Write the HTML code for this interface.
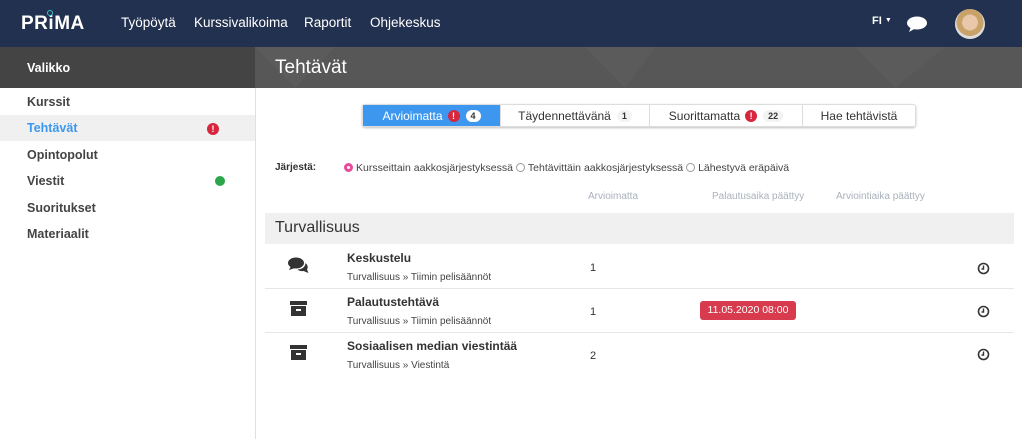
<!DOCTYPE html>
<html><head><meta charset="utf-8"><style>
*{margin:0;padding:0;box-sizing:border-box}
body{width:1022px;height:439px;overflow:hidden;background:#fff;font-family:"Liberation Sans",sans-serif;position:relative;color:#333}
.a{position:absolute;white-space:nowrap}
.nav{left:0;top:0;width:1022px;height:47px;background:#22314f}
.bar{top:47px;height:41px}
.side div{position:absolute;left:27px;font-size:12.5px;color:#444;font-weight:bold}
.tabs{left:362px;top:104px;width:554px;height:23px;border:1px solid #ddd;border-radius:3px;box-shadow:0 1px 2px rgba(0,0,0,.25);display:flex;font-size:12px}
.tabs div{height:100%;display:flex;align-items:center;justify-content:center;border-right:1px solid #ddd}
.ex{display:inline-block;width:12px;height:12px;border-radius:50%;background:#d7263d;color:#fff;font-size:9px;font-weight:bold;text-align:center;line-height:12px;margin-left:5px}
.cnt{display:inline-block;font-size:9px;font-weight:bold;padding:1px 5px;border-radius:7px;background:#f3f3f3;margin-left:6px;color:#333}
.rad{display:inline-block;width:9px;height:9px;border-radius:50%;border:1px solid #999;margin-right:3px;vertical-align:-1px}
.row{left:265px;width:749px;height:44px;border-bottom:1px solid #e6e6e6}
.t{font-size:12px;font-weight:bold;color:#333}
.s{font-size:10px;color:#444}
.box{width:17px;height:15px}
.box:before{content:"";position:absolute;left:0;top:0;width:17px;height:4px;background:#333}
.box:after{content:"";position:absolute;left:1px;top:5px;width:15px;height:10px;background:#333}
.box i{position:absolute;left:6px;top:8px;width:5px;height:1.5px;background:#fff;z-index:2}
</style></head><body>
<div class="a nav"></div>
<div class="a" style="left:21px;top:13px;color:#fff;font-size:19px;font-weight:bold;letter-spacing:0.5px">PR<span style="position:relative">i<span style="position:absolute;left:-1px;top:-3px;width:6px;height:6px;border:1.5px solid #3cc3c8;border-radius:50%"></span></span>MA</div>
<div class="a" style="left:121px;top:15px;color:#fff;font-size:13.5px">Työpöytä</div>
<div class="a" style="left:194px;top:15px;color:#fff;font-size:13.5px">Kurssivalikoima</div>
<div class="a" style="left:304px;top:15px;color:#fff;font-size:13.5px">Raportit</div>
<div class="a" style="left:370px;top:15px;color:#fff;font-size:13.5px">Ohjekeskus</div>
<div class="a" style="left:872px;top:15px;color:#fff;font-size:11px;font-weight:bold">FI <span style="font-size:7px;vertical-align:2px">▼</span></div>
<svg class="a" style="left:906px;top:15px" width="22" height="18" viewBox="0 0 22 18"><ellipse cx="11" cy="8" rx="10" ry="6.5" fill="#fff"/><path d="M5 12 L3 17 L10 13Z" fill="#fff"/></svg>
<div class="a" style="left:955px;top:9px;width:30px;height:30px;border-radius:50%;background:radial-gradient(circle at 50% 45%,#e8c8a8 0 35%,#c9a26a 36% 60%,#ddd 61%)"></div>
<div class="a bar" style="left:0;width:255px;background:#444"></div>
<div class="a bar" style="left:255px;width:767px;background:#575757;overflow:hidden">
<svg width="767" height="41"><path d="M0 0 L40 41 L80 0Z M330 0 L370 41 L400 0Z M600 0 L640 41 L690 0Z" fill="#5b5b5b"/></svg></div>
<div class="a" style="left:27px;top:61px;color:#fff;font-size:12.5px;font-weight:bold">Valikko</div>
<div class="a" style="left:275px;top:57px;color:#fff;font-size:19px">Tehtävät</div>
<div class="a" style="left:255px;top:88px;width:1px;height:351px;background:#e0e0e0"></div>
<div class="a" style="left:0;top:115px;width:255px;height:26px;background:#f0f0f0"></div>
<div class="side">
<div style="top:95px">Kurssit</div>
<div style="top:121px;color:#3d97ee">Tehtävät</div>
<div style="top:148px">Opintopolut</div>
<div style="top:174px">Viestit</div>
<div style="top:201px">Suoritukset</div>
<div style="top:227px">Materiaalit</div>
</div>
<div class="a ex" style="left:207px;top:123px;margin:0">!</div>
<div class="a" style="left:215px;top:176px;width:10px;height:10px;border-radius:50%;background:#2ca64a"></div>
<div class="a tabs">
<div style="width:138px;background:#3d97ee;color:#fff">Arvioimatta<span class="ex">!</span><span class="cnt" style="background:#fff">4</span></div>
<div style="width:149px">Täydennettävänä<span class="cnt">1</span></div>
<div style="width:153px">Suorittamatta<span class="ex">!</span><span class="cnt">22</span></div>
<div style="width:112px;border:0">Hae tehtävistä</div>
</div>
<div class="a" style="left:275px;top:162px;font-size:10px;font-weight:bold">Järjestä:</div>
<div class="a" style="left:344px;top:162px;font-size:10.5px;color:#444"><span class="rad" style="border:3px solid #e84b9b"></span>Kursseittain aakkosjärjestyksessä <span class="rad"></span>Tehtävittäin aakkosjärjestyksessä <span class="rad"></span>Lähestyvä eräpäivä</div>
<div class="a" style="left:588px;top:191px;font-size:10px;color:#aab2bb">Arvioimatta</div>
<div class="a" style="left:712px;top:191px;font-size:10px;color:#aab2bb">Palautusaika päättyy</div>
<div class="a" style="left:836px;top:191px;font-size:10px;color:#aab2bb">Arviointiaika päättyy</div>
<div class="a" style="left:265px;top:213px;width:749px;height:31px;background:#f0f0f0"></div>
<div class="a" style="left:275px;top:219px;font-size:16px;color:#333">Turvallisuus</div>
<div class="a row" style="top:245px"></div>
<div class="a row" style="top:289px"></div>
<div class="a row" style="top:333px;border:0"></div>
<svg class="a" style="left:288px;top:257px" width="22" height="17" viewBox="0 0 22 17"><ellipse cx="8" cy="6" rx="8" ry="5.5" fill="#333"/><path d="M3 9 L1 13 L7 11Z" fill="#333"/><path d="M17.5 6 Q17 12 9.5 12.5 Q12 14.5 15.5 14 L20.5 16 L19 12.5 Q21 9 17.5 6Z" fill="#333"/></svg>
<div class="a box" style="left:290px;top:301px"><i></i></div>
<div class="a box" style="left:290px;top:345px"><i></i></div>
<div class="a t" style="left:347px;top:251px">Keskustelu</div>
<div class="a s" style="left:347px;top:272px">Turvallisuus » Tiimin pelisäännöt</div>
<div class="a t" style="left:347px;top:295px">Palautustehtävä</div>
<div class="a s" style="left:347px;top:316px">Turvallisuus » Tiimin pelisäännöt</div>
<div class="a t" style="left:347px;top:339px">Sosiaalisen median viestintää</div>
<div class="a s" style="left:347px;top:360px">Turvallisuus » Viestintä</div>
<div class="a" style="left:590px;top:262px;font-size:11px">1</div>
<div class="a" style="left:590px;top:306px;font-size:11px">1</div>
<div class="a" style="left:590px;top:350px;font-size:11px">2</div>
<div class="a" style="left:700px;top:301px;width:96px;height:19px;background:#d73b4d;border-radius:3px;color:#fff;font-size:10.5px;text-align:center;line-height:19px">11.05.2020 08:00</div>
<svg class="a" style="left:977px;top:262px" width="13" height="13" viewBox="0 0 13 13"><circle cx="6.5" cy="6.5" r="5" fill="none" stroke="#333" stroke-width="1.6"/><path d="M6.5 3.5 V7 H4.5" fill="none" stroke="#333" stroke-width="1.4"/></svg>
<svg class="a" style="left:977px;top:305px" width="13" height="13" viewBox="0 0 13 13"><circle cx="6.5" cy="6.5" r="5" fill="none" stroke="#333" stroke-width="1.6"/><path d="M6.5 3.5 V7 H4.5" fill="none" stroke="#333" stroke-width="1.4"/></svg>
<svg class="a" style="left:977px;top:348px" width="13" height="13" viewBox="0 0 13 13"><circle cx="6.5" cy="6.5" r="5" fill="none" stroke="#333" stroke-width="1.6"/><path d="M6.5 3.5 V7 H4.5" fill="none" stroke="#333" stroke-width="1.4"/></svg>
</body></html>
